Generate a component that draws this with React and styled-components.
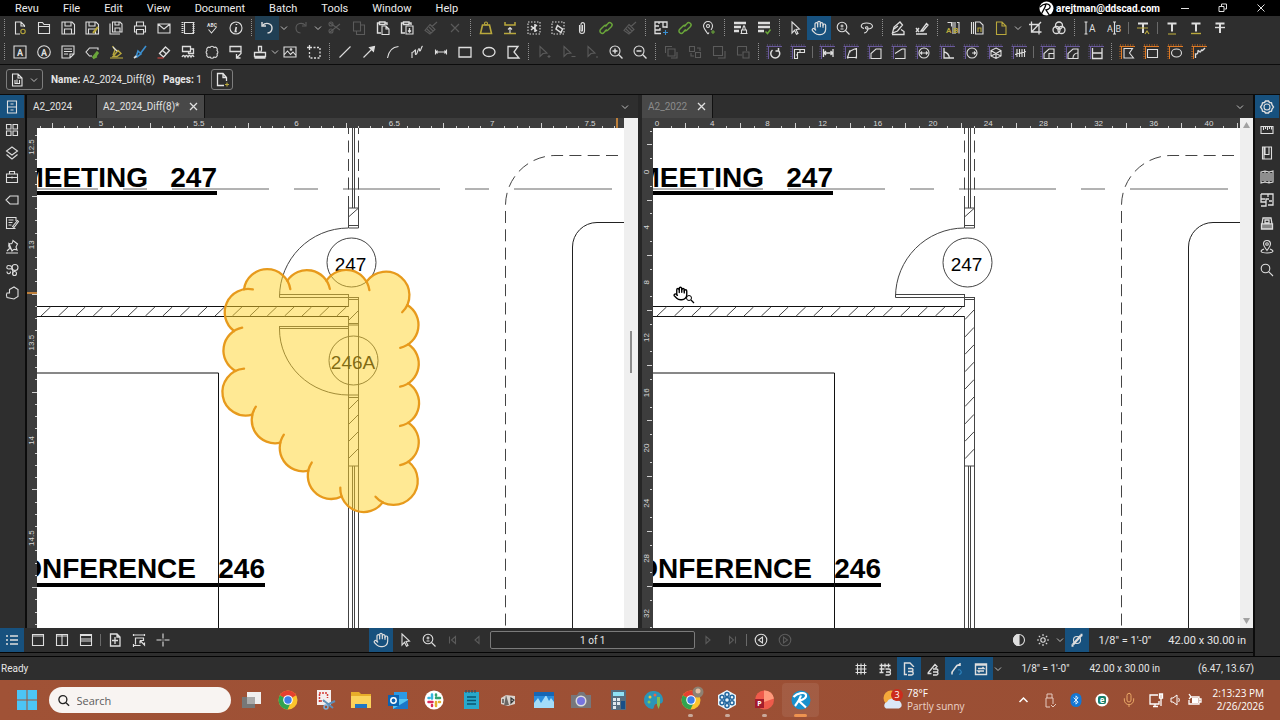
import React from 'react';
import styled, { createGlobalStyle, css } from 'styled-components';
import { Hand, Bluetooth, Mic } from 'lucide-react';

const GlobalStyle = createGlobalStyle`
  * { box-sizing: border-box; }
  body {
    margin: 0;
    background: #2e2e2e;
    color: #e6e6e6;
    font-family: Roboto, "Liberation Sans", sans-serif;
    font-size: 10px;
    overflow: hidden;
  }
  button {
    font: inherit;
    color: inherit;
    background: none;
    border: none;
    padding: 0;
  }
`;

/* ---------- icons ---------- */

const GREEN = '#6aa63a';
const YELLOW = '#b9a83c';
const BLUE = '#3b8fd0';
const PURPLE = '#6a5a9c';
const ORANGE = '#e07a24';

const Corner = ({ color = PURPLE }) => (
  <g stroke={color} strokeWidth="1" fill="none">
    <path d="M5 6.5H20M6.5 6V19" />
    <path d="M5 5H20M5 6V19" strokeDasharray="1 1.5" />
  </g>
);

const folded = 'M7.5 6H13l4 4v8.500H7.500zM13 6v4h4';
const floppy = 'M6 6h10l2.500 2.500V18H6zM9 6v4h6V6M8.500 18v-5h7v5';
const house = 'M8 18.500v-5L13 9h5v9.500z';

const icons = {
  newDoc: <><path d="M12 18H7.500V6H13l3.500 3.500V11M13 6v4h3.500" /><circle cx="15" cy="15.500" r="2.200" stroke={YELLOW} /></>,
  open: <path d="M6.500 17.500V6.500h4l1.500 2h5.500v9zM6.500 10.500h11" />,
  save: <path d={floppy} />,
  saveAs: <><path d={floppy} /><path d="M13 17l5-6" stroke={YELLOW} strokeWidth="2" /></>,
  saveAll: <path d="M8.500 6H16l2 2v8H8.500zM11 6v3h4V6M11 16v-4h5v4M6 7.500v10.500h10" />,
  print: <path d="M8.500 10V6h7v4M8.500 16H6.500v-6h11v6h-2M8.500 13.500h7V18h-7z" />,
  mail: <path d="M6 8h12v9H6zM6 8l6 5 6-5" />,
  binder: <><path d="M8.500 6.500h9v11h-9z" /><path d="M6.500 6v12M17.500 6v12" strokeWidth="2" strokeDasharray="1 1" /></>,
  spell: <><text x="12" y="10.500" fontSize="5" fontWeight="700" textAnchor="middle" fill="currentColor" stroke="none">ABC</text><path d="M8.500 13.500l3 3.500 5-6" /></>,
  info: <><circle cx="12" cy="12" r="6" /><path d="M12.300 11l-1 4.500h1.500M12.500 8v1" strokeWidth="1.600" /></>,
  undo: <><path d="M7.500 9.500c3-3.500 9.500-2.500 9.500 2.500 0 3-2 4.800-4.500 5" strokeWidth="1.400" /><path d="M7 6v4h4" strokeWidth="1.400" /></>,
  redo: <><path d="M16.500 9.500c-3-3.500-9.500-2.500-9.500 2.500 0 3 2 4.800 4.500 5" /><path d="M17 6v4h-4" /></>,
  cut: <><path d="M7 7l10 7M7 16l10-8" /><circle cx="8" cy="8" r="2" /><circle cx="8" cy="15" r="2" /></>,
  copy: <path d="M6.500 6h7v9h-7zM9.500 15v3.500h8V9h-4" />,
  paste: <><path d="M10 17H6.500V7h2M14 7h2v2M8.500 6h5.500v2.500H8.500z" strokeWidth="1.400" /><path d="M11 10h4l3 3v5.500h-7zM15 10v3h3" /></>,
  pasteIn: <><path d="M10 17H6.500V7h2M14 7h2v2M8.500 6h5.500v2.500H8.500z" strokeWidth="1.400" /><path d="M11 10h7v8h-7z" /><path d="M14.500 12v4M13 14.500l1.500 1.500 1.500-1.500" strokeWidth="1.400" /></>,
  brush: <path d="M18 6l-5 4.500M11 8.500l5 5-5 4.500-5-3.500zM8 13l4 4M10 11l4 4" />,
  cross: <path d="M8 8l8 8M16 8l-8 8" />,
  weight: <g stroke={YELLOW}><path d="M8.500 9h7l2 8.500h-11z" strokeWidth="1.600" /><circle cx="12" cy="7.500" r="1.500" /></g>,
  flatten: <><path d="M7 6v3h10V6M6 17.500h12" stroke={YELLOW} strokeWidth="1.500" /><path d="M12 17v-5M10 13.500l2-2 2 2" /></>,
  snipSel: <><path d="M6 6h12v12H6z" strokeDasharray="1.500 1.500" /><path d="M9 10l6 5M9 14l6-5M13 8v8" strokeWidth="1.600" /></>,
  eraseSel: <><path d="M6 6h12v12H6z" strokeDasharray="1.500 1.500" /><path d="M11.500 9.500l5 3.500-1.500 3.500-5-3.500z" strokeWidth="1.500" /></>,
  clip: <path d="M9.500 9v6a2.500 2.500 0 0 0 5 0V8a1.800 1.800 0 0 0-3.500 0v6.500a.8.800 0 0 0 1.500 0V9" />,
  link: <g stroke={GREEN} strokeWidth="1.400"><path d="M11 10.500l3-3a2.200 2.200 0 0 1 3.500 3l-3.500 3.500a2.200 2.200 0 0 1-3 0M13 13.500l-3 3a2.200 2.200 0 0 1-3.500-3L10 10a2.200 2.200 0 0 1 3 0" /></g>,
  planAdd: <><path d="M12 17.500H6V6h12v6M6 10h4M10 6v2M14 6v5h4M6 14h5v-2" strokeWidth="1.300" /><path d="M16.500 14v5M14 16.500h5" stroke={BLUE} /></>,
  pinAdd: <><path d="M11 18c-3-4-4.500-6-4.500-8a4.500 4.500 0 0 1 9 0c0 1.500-.5 2.500-1.500 4M11 18l1-1.500" /><circle cx="11" cy="10" r="1.500" /><path d="M16 14v4M14 16h4" stroke={GREEN} /></>,
  setA: <><path d="M6 7h12M6 11h7M6 15h5" strokeWidth="2.500" /><path d="M13.500 17.500V14h5v3.500M14.500 14l1-4h1l1 4M12.500 17.500h7" /></>,
  setB: <><path d="M6 7h12M6 11h12M6 15h6" strokeWidth="2.500" /><path d="M13.500 15.500l2 2 3-4" stroke={GREEN} strokeWidth="1.500" /></>,
  arrow: <path d="M9 6l7.500 7-3.500.5 2 4-1.500.8-2-4L9 17z" />,
  hand: <Hand x="4" y="4" size={16} strokeWidth={1.800} />,
  zoomPage: <><circle cx="11" cy="11" r="4.800" /><path d="M14.500 14.500l4 4M9.500 10h3M9.500 13h3M11 8.500v3" /></>,
  zoomIn: <><circle cx="11" cy="11" r="5" /><path d="M14.800 14.800l3.700 3.700M8.500 11h5M11 8.500v5" strokeWidth="1.400" /></>,
  zoomOut: <><circle cx="11" cy="11" r="5" /><path d="M14.800 14.800l3.700 3.700M8.500 11h5" strokeWidth="1.400" /></>,
  lasso: <path d="M9 12.500c-4-.5-4-5.500 2.500-5.500s8.500 5 2 6c-2 .5-4-1-2.500-2s3 1 1.500 3.500c-.8 1.500-2 2.500-3.500 2.500" />,
  sign: <path d="M6.500 17l1.500-6 6-5 2.500 3-5 6zM6 18.500h12v-3l-3-2M8 13l4-3" strokeWidth="1.300" />,
  initial: <path d="M6 12l3 4M9 12l-3 4M11 15l5.500-7.500 1.500 1.500-5 6zM6 18h11" strokeWidth="1.300" />,
  compareAB: <><path d="M6.500 6.500h4v4M14 6v12M16 6.500h2v11M12 6v12" /><text x="5" y="17" fontSize="8" fontWeight="700" fill={YELLOW} stroke="none">A B</text></>,
  stackDoc: <><path d="M6.500 18V6M8.500 18V6M10.500 6H15l3 3v9h-7.500z" /><path d="M13 16v-4h3v4" stroke={YELLOW} /></>,
  yellowDoc: <path d={folded} stroke={YELLOW} />,
  crop: <path d="M8.500 5.500V16h10M6 8.500h10v10M8.500 16L18 6" strokeWidth="1.300" />,
  overlay: <g strokeWidth="1.300"><circle cx="12" cy="9.500" r="3.500" /><circle cx="9.500" cy="14" r="3.500" /><circle cx="14.500" cy="14" r="3.500" /></g>,
  cursorA: <><path d="M6.500 6h3M6.500 18h3M8 6v12" /><text x="11" y="15.500" fontSize="10" fill="currentColor" stroke="none">A</text></>,
  cursorAB: <><path d="M11 6h3M11 18h3M12.500 6v12" /><text x="5" y="15.500" fontSize="9" fill="currentColor" stroke="none">A</text><text x="13.500" y="15.500" fontSize="9" fill="currentColor" stroke="none">B</text></>,
  textIns: <><path d="M7 7.500h10M12 7.500V17" strokeWidth="2" /><path d="M6 12h11M14 18l2-3 2 3" stroke={YELLOW} /></>,
  textHigh: <><path d="M7.500 7.500h9M12 7.500v8" strokeWidth="2" /><path d="M8 18h8" stroke={YELLOW} /></>,
  textUnder: <><path d="M7.500 7.500h9M12 7.500v8" strokeWidth="2" /><path d="M7 17.500h10" stroke={YELLOW} strokeWidth="1.400" /></>,
  textStrike: <><path d="M7.500 7.500h9M12 7.500V17" strokeWidth="2" /><path d="M7 11.500h10" strokeWidth="1.400" /></>,

  textBox: <><path d="M6 6h12v12H6z" /><text x="12" y="15.500" fontSize="9" fontWeight="700" textAnchor="middle" fill="currentColor" stroke="none">A</text></>,
  typewriter: <><circle cx="12" cy="12" r="6.300" /><text x="12" y="15.500" fontSize="9" fontWeight="700" textAnchor="middle" fill="currentColor" stroke="none">A</text></>,
  note: <path d="M6 6h12v8l-4 4H6zM8 9h8M8 11.500h8M8 14h4M14 18v-4h4" />,
  tagClip: <><path d="M12 16H9.500L6 12l3.500-4H18v2" /><path d="M13 17l4-5 1 1-3.500 5zM13 18.500l4-2" stroke={GREEN} strokeWidth="1.700" /></>,
  highlighter: <><path d="M9 16.500l5-6 3 3-4 3zM8.500 6l2.500 4-2 5" stroke={YELLOW} strokeWidth="1.400" /><path d="M6 18h13" stroke={YELLOW} /><path d="M9 7l4 4" /></>,
  pen: <><path d="M18 6l-6 8M10 11l3 3-4 3L8 17z" stroke={BLUE} strokeWidth="1.600" /><path d="M6 18l2.500-2" strokeWidth="1.700" /></>,
  eraser: <><path d="M13.500 7l4 3.500-6 6.500-4-3.500zM10.500 10.500l4 3.500" strokeWidth="1.300" /><path d="M5.500 18h6" stroke="#d8453f" /></>,
  cloudText: <path d="M6.500 6.500h8v5h-8zM14.500 9h3v4.500h-5v-2M6 17c1-2 2-2 3 0 1-2 2-2 3 0 1-2 2-2 3 0 1-2 2-2 3 0" strokeWidth="1.300" />,
  cloud: <path d="M10 7.500a2.200 2.200 0 0 1 4 0 2.200 2.200 0 0 1 3 3 2.200 2.200 0 0 1 0 3.500 2.200 2.200 0 0 1-3 3 2.200 2.200 0 0 1-4 0 2.200 2.200 0 0 1-3-3 2.200 2.200 0 0 1 0-3.500 2.200 2.200 0 0 1 3-3z" />,
  callout: <path d="M6 6.500h11v5H6zM17 9.500v4l-4.500 4.500M12.500 14v4h4" strokeWidth="1.300" />,
  stamp: <path d="M10.500 6.500h3v3.500l-1 2.500h5v4H6.500v-4h5l-1-2.500zM6.500 18h11" strokeWidth="1.300" />,
  image: <><path d="M6 7h12v10H6zM6 15l3.500-4 3 3.500 2.500-2.500 3 3.500" /><circle cx="13" cy="9.500" r=".8" /></>,
  snapshot: <><path d="M7.500 5v5M5 7.500h5" strokeWidth="1.300" /><path d="M11.500 7.500H18V18H7.500v-6.500" strokeDasharray="2 1.500" strokeWidth="1.300" /></>,
  line: <path d="M6.500 17.500l11-11" />,
  arrowLine: <><path d="M6.500 17.500l8-8" /><path d="M12.500 7.500l5-1-1 5z" fill="currentColor" /></>,
  arc: <path d="M6.500 18C7.500 12 11 7 17.500 6.500" />,
  polyline: <path d="M7 18v-5.500c2 0 3-3 3.500-2.500s-1 5 .5 4.500 2-6 3-6 0 3 1 2.500 1-3.500 2.500-5" />,
  dim: <path d="M6.500 9.500v5M17.500 9.500v5M6.500 12h11M8.500 10.500L7 12l1.500 1.500M15.500 10.500L17 12l-1.500 1.500" />,
  rect: <path d="M6 7.500h12v9.500H6z" strokeWidth="1.300" />,
  ellipse: <ellipse cx="12" cy="12" rx="6" ry="4.500" strokeWidth="1.300" />,
  polygon: <path d="M7 6.500h10l-4 5.500 5 6H7z" strokeWidth="1.300" />,
  selAdd: <><path d="M8 6.500l7 6.500-4 .5-3 3z" /><path d="M17 15v3M15.500 16.500h3" /></>,
  selSub: <><path d="M8 6.500l7 6.500-4 .5-3 3z" /><path d="M15.500 16.500h4" /></>,
  selAll: <><path d="M8 6.500l7 6.500-4 .5-3 3z" /><path d="M17 16v2" /></>,
  front: <path d="M9 9h7v7H9zM6.500 13V6.500H13M12 18h6v-6" />,
  backward: <path d="M6.500 6.500h5v5h-5zM12.500 12.500h5v5h-5zM14 8h3v3M8 13v3h3" />,
  forward: <path d="M6.500 6.500h9v9h-9zM11 18h7v-7" />,
  back: <path d="M12 12h6v6h-6zM6.500 6.500h9V11M6.500 6.500v8.500H11" />,

  mRotate: <><Corner /><path d="M10.500 10a4.500 4.500 0 1 0 5.500 0M16.500 8v3h-3" strokeWidth="1.500" /></>,
  mLevel: <><Corner /><path d="M8.500 9.500h10v3h-7v6h-3zM14 10v2M10 15h2" /></>,
  mLength: <><Corner /><path d="M8.500 9v8M18 9v8M9 13h9M11 11l-2 2 2 2M15.500 11l2 2-2 2" strokeWidth="1.300" /></>,
  mPoly: <><Corner /><path d="M8.500 17.500l2-6 5-2.500h2v8.500z" /><path d="M8 17.500h1.500M10 11.500h1.500M16.500 9h1.500M16.500 17.500h1.500" strokeWidth="2" /></>,
  mArea: <><Corner /><path d={house} /></>,
  mPerim: <><Corner /><path d="M8 13.500L15 9h3v9.500H8" /></>,
  mDiam: <><Corner /><circle cx="13" cy="13" r="5" /><path d="M9 13h8M11 11.500L9.500 13l1.500 1.500M15 11.500l1.500 1.500-1.500 1.500" /></>,
  mAngle: <><Corner /><path d="M9 8v10h10M9 12c3 .5 5 3 5.500 6" strokeWidth="1.300" /></>,
  mRadius: <><Corner /><circle cx="13" cy="13" r="5" /><path d="M13 13h4M15 11.500l1.500 1.500-1.500 1.500" /></>,
  mVolume: <><Corner /><path d="M13 8l5 2.500v5.500l-5 2.500-5-2.500v-5.500zM8 10.500l5 3 5-3M13 13.500V18M8 16l5-2.500 5 2.500" /></>,
  mCount: <><Corner /><path d="M10 9v8M12.500 9v8M15 9v8M17.500 9v8M8 14.500l11-3" /></>,
  mCutArea: <><Corner /><path d={house} /><path d="M13 18v-4.500h5" /></>,
  mCutPoly: <><Corner /><path d={house} /><path d="M13 18c0-3 2-5 5-5" /></>,
  mSlope: <><Corner /><path d="M8.500 8v10.500H18V8M8.500 13H18" strokeWidth="1.300" /></>,
  oPoly: <><Corner color={ORANGE} /><path d="M9 8.500h8.500l-3 4.500 4 5H9z" /></>,
  oRect: <><Corner color={ORANGE} /><path d="M8.500 9.500h10v8h-10z" /></>,
  oEllipse: <><Corner color={ORANGE} /><ellipse cx="13.500" cy="13" rx="5" ry="4" /></>,
  oFree: <><Corner color={ORANGE} /><path d="M8.500 18v-4c2 .5 2.500-1 2.500-3s2 3 3 0 1 1 2-1l2-2" strokeWidth="1.300" /></>,

  fileAccess: <path d="M7.500 6h9v12h-9zM7.500 12h9M10.500 9h3M10.500 15h3" />,
  thumbs: <path d="M6.500 6.500h4.500v4.500H6.500zM13 6.500h4.500v4.500H13zM6.500 13h4.500v4.500H6.500zM13 13h4.500v4.500H13z" />,
  layers: <path d="M12 6l5.500 4-5.500 4-5.500-4zM6.500 13.500l5.500 4.500 5.500-4.500" />,
  toolbox: <path d="M6.500 9h11v8.500h-11zM9.500 9V6.500h5V9M6.500 12.500h11M12 11.500v2" />,
  tag: <path d="M10 8h8v8h-8l-4-4z" />,
  sheetPen: <path d="M16 10V6.500H6.500v11h9M8.500 9h5M8.500 11.500h4M8.500 14h3M12.500 15.500l5-6 1 1-4.500 6z" />,
  pushpin: <path d="M6 18h12M7 16l3-3M9 8.500c3 1 3.500-.5 4-3l4.500 3.500-1.500 3 1 3c-2-1-4-.500-5 1zM9 8.500c-.5 2 0 5 3 6.500" />,
  binocs: <><circle cx="15" cy="9.500" r="3" /><circle cx="14.500" cy="15.500" r="2" /><path d="M12.500 11.500c-1-4-2-4-4-4S6 11 8.500 11s3-1 4 1 0 4 .500 4M7 13.500c0 3 3.500 3 3.500 0" /></>,
  glove: <path d="M9.500 8.500L14 6l4 2.500v7L14 18l-7-1.500c-1-2-1-3 0-4.500h2.500zM9.500 8.500V12" />,
  gear: <><circle cx="12" cy="12" r="3" /><path d="M10.500 6h3l1 1.500 2 .3.500 2L18.500 12 17 14.200l-.5 2-2 .3-1 1.500h-3l-1-1.500-2-.3-.5-2L5.500 12 7 9.800l.5-2 2-.3z" strokeWidth="1.400" /></>,
  ruler: <path d="M6 8.500h12v7H6zM8.500 8.500v3.500M10.500 8.500v2.500M12.500 8.500v3.500M14.500 8.500v2.500M16.500 8.500v3" />,
  bookmark: <path d="M7.500 6h9v12h-9zM10 6v7.500h4V6M9 6v12" />,
  map: <path d="M6 7l4-1 4 1 4-1v11l-4 1-4-1-4 1zM10 6v11M14 7v11M8 8v8M12 8v8M16 8v8" />,
  plan: <path d="M6 6h12v11h-5M6 6v8h5v4H6M6 11h4M13 6v3M11 14v-3h3M17 13h-3" strokeWidth="1.300" />,
  studio: <><path d="M8 7h8l1 6H7zM6.500 13h11v5h-11zM10 9h4v3h-4z" strokeWidth="1.300" /><path d="M6.500 16h11" strokeWidth="4" opacity=".5" /></>,
  geoPin: <><path d="M12 15.500c-2.500-3.500-3.500-4.500-3.500-6.500a3.500 3.500 0 0 1 7 0c0 2-1 3-3.500 6.500zM9 14c-5 2-3 4 3 4s8-2 3-4" /><circle cx="12" cy="9" r="1.300" /></>,
  search: <><circle cx="10.500" cy="10.500" r="4.300" /><path d="M13.800 13.800l4.200 4.200" /></>,
  list: <path d="M6 8h2M6 12h2M6 16h2M10 8h8M10 12h8M10 16h8" strokeWidth="1.600" />,
  viewOne: <path d="M6.500 6.500h11v11h-11zM6.500 8h11" />,
  viewCols: <path d="M6.500 6.500h11v11h-11zM12 6.500v11M6.500 8h11" />,
  viewRows: <path d="M6.500 6.500h11v11h-11zM6.500 11h11M6.500 13h11M6.500 7.500h11" />,
  fitPage: <path d="M7.500 6H14l3 3v9H7.500zM12 9v7M9 12.500h6M14 6v3h3" strokeWidth="1.300" />,
  fitWidth: <path d="M6.500 6v2M6.500 7h11M17.500 6v2M8.500 16.500v-6.500h8v3M6.500 17.500h7M6.500 16v3M13 12.500v3M13 12.500h3M13 12.500l4.500 4.500v-2.500" strokeWidth="1.200" />,
  crosshair: <path d="M12 5.500v5M12 13.500v5M5.500 12h5M13.500 12h5M11.500 12h1" />,
  first: <path d="M8.500 8.500v7M14.500 8.500v7l-4-3.500z" />,
  prev: <path d="M14 8.500v7L10 12z" />,
  next: <path d="M10 8.500v7l4-3.500z" />,
  last: <path d="M9.500 8.500v7l4-3.500zM15.500 8.500v7" />,
  viewPrev: <><circle cx="12" cy="12" r="5.800" /><path d="M13.500 9v6L9.500 12z" /></>,
  viewNext: <><circle cx="12" cy="12" r="5.800" /><path d="M10.500 9v6l4-3z" /></>,
  contrast: <><circle cx="12" cy="12" r="5.500" /><path d="M12 6.500a5.500 5.500 0 0 0 0 11z" fill="currentColor" /></>,
  sun: <><circle cx="12" cy="12" r="2.200" /><path d="M12 6v2M12 16v2M6 12h2M16 12h2M7.800 7.800l1.400 1.400M14.800 14.800l1.400 1.400M7.800 16.200l1.400-1.400M14.800 9.200l1.400-1.400" /></>,
  lineWeight: <><path d="M8 16.500l8-9" strokeWidth="2.500" /><circle cx="12" cy="12" r="3.500" /><path d="M6.500 17.500h2M15.500 7h2" strokeWidth="2.500" /></>,
  grid: <path d="M8.500 6.500v11M12 6.500v11M15.500 6.500v11M6.500 8.500h11M6.500 12h11M6.500 15.500h11" />,
  gridSnap: <path d="M8.500 6.500v9M12 6.500v4M15.500 6.500v4M6.500 8.500h11M6.500 12h5M6.500 15.500h4M12.500 12h3.500a1.500 1.500 0 0 1 0 3h-3M16 15a1.500 1.500 0 0 1 0 3h-3.500" strokeWidth="1.300" />,
  docSnap: <path d="M10 17.500H7.500V6H13l3.500 3.500V10M11 11.500h3.500a1.500 1.500 0 0 1 0 3H11M14.500 14.500a1.500 1.500 0 0 1 0 3.500H11" strokeWidth="1.400" />,
  markSnap: <path d="M7 16l7-8.500 2 2-1.500 1.500M6.500 16.500h4M12 12h3.500a1.500 1.500 0 0 1 0 3H12M15.500 15a1.500 1.500 0 0 1 0 3H12" strokeWidth="1.300" />,
  reuse: <><path d="M7 16.500c0-3 3-5 5-8l3-1M7 14.500v3M15 6v3" strokeWidth="1.500" /><path d="M13 13c3-1 5 3 1 4.500" stroke="#2c82bd" /></>,
  sync: <path d="M6.500 7h11v10.500h-11zM6.500 8h11M9 11.500h6l-1.500-1.500M15 14H9l1.500 1.500" strokeWidth="1.400" />,
  pageSet: <path d="M7.500 6H13l4 4v8H7.500zM13 6v4h4M10 12v3.500h4.500V12M12 11.500v4" />,
  pageNew: <><path d="M14 17.500H7.500V5.500H13l3.500 4V13M13 5.500v4h3.500" strokeWidth="1.300" /><path d="M17 14.500v4M15 16.500h4" stroke={YELLOW} /></>,
};

const GlyphSvg = styled.svg`
  display: block;
  width: 24px;
  height: 24px;
  flex: none;
  fill: none;
  stroke: currentColor;
  stroke-width: 1.1;
`;

const Glyph = ({ name }) => (
  <GlyphSvg viewBox="0 0 24 24" aria-hidden="true">{icons[name]}</GlyphSvg>
);

const IconButton = styled.button`
  display: flex;
  flex: none;
  align-items: center;
  justify-content: center;
  width: 24px;
  height: ${({ $short }) => ($short ? '23px' : '24px')};
  color: ${({ disabled }) => (disabled ? '#5b5b5b' : '#dedede')};
  background: ${({ $on, $soft }) => ($on ? '#17517e' : $soft ? '#203f54' : 'transparent')};
`;

const ChevronButton = styled.button`
  display: flex;
  flex: none;
  align-items: center;
  justify-content: center;
  width: ${({ $tight }) => ($tight ? '6px' : '10px')};
  height: 24px;
`;

const Chevron = ({ tight, label = 'More' }) => (
  <ChevronButton $tight={tight} aria-label={label}>
    <svg width="8" height="6" viewBox="0 0 8 6" fill="none" stroke="#bdbdbd" overflow="visible">
      <path d="M1 1.500l3 3 3-3" />
    </svg>
  </ChevronButton>
);

const Grip = styled.span`
  flex: none;
  width: 1px;
  height: 18px;
  margin: 0 3px;
  background: repeating-linear-gradient(#8f8f8f 0 1px, transparent 1px 2px);
`;

const Divider = styled.span`
  flex: none;
  width: 1px;
  height: 12px;
  margin: 0 2px;
  background: #6a6a6a;
`;

/* ---------- title and tool bars ---------- */

const Page = styled.div`
  display: flex;
  flex-direction: column;
  height: 100vh;
`;

const MenuBar = styled.nav`
  display: flex;
  align-items: center;
  height: 16px;
  padding: 0 14px 0 15px;
  background: #000;
  color: #ececec;
  font-size: 11px;
`;

const MenuList = styled.div`
  display: flex;
  gap: 24px;
`;

const Account = styled.div`
  display: flex;
  align-items: center;
  gap: 2px;
  margin-left: auto;
  margin-right: 20px;
  font-size: 10px;
  font-weight: 700;
  color: #fff;
`;

const WindowButtons = styled.div`
  display: flex;
  gap: 28px;

  svg { display: block; fill: none; stroke: #e0e0e0; }
`;

const Toolbars = styled.div`
  border-bottom: 1px solid #0c0c0c;
`;

const ToolRow = styled.div`
  display: flex;
  align-items: center;
  height: 24px;
  padding-left: 1px;
`;

const PropertyBar = styled.div`
  display: flex;
  align-items: center;
  height: 30px;
  padding: 0 6px;
  border-bottom: 1px solid #0c0c0c;
`;

const PropertyText = styled.span`
  margin-left: 8px;
`;

const Outlined = styled.button`
  display: flex;
  align-items: center;
  justify-content: center;
  width: ${({ $wide }) => ($wide ? '37px' : '22px')};
  height: 21px;
  padding-right: ${({ $wide }) => ($wide ? '5px' : '0')};
  margin-left: ${({ $wide }) => ($wide ? '0' : '9px')};
  border: 1px solid #7d7d7d;
  border-radius: 3px;
  overflow: hidden;
`;

/* ---------- workspace ---------- */

const Workspace = styled.div`
  display: flex;
  flex: 1;
  min-height: 0;
`;

const Center = styled.div`
  display: flex;
  flex-direction: column;
  flex: 1;
  min-width: 0;
  margin-bottom: 3px;
  border-bottom: 1px solid #050505;
`;

const Row = styled.div`
  display: flex;
  flex: 1;
  min-height: 0;
`;

const Rail = styled.aside`
  display: flex;
  flex-direction: column;
  flex: none;
  width: 27px;
  ${({ $side }) => ($side === 'left'
    ? css`border-right: 2px solid #0c0c0c;`
    : css`border-left: 2px solid #0c0c0c;`)}

  button:nth-of-type(3n) { margin-bottom: 1px; }
`;

const Pane = styled.section`
  display: flex;
  flex-direction: column;
  flex: 1;
  min-width: 0;
`;

const Splitter = styled.div`
  flex: none;
  width: 4px;
  background: #262626;
`;

const TabBar = styled.div`
  display: flex;
  align-items: center;
  height: 23px;
  padding-right: 8px;

  > :last-child { margin-left: auto; }
`;

const Tab = styled.div`
  display: flex;
  align-items: center;
  gap: 10px;
  height: 23px;
  padding: 0 6px;
  border-right: 1px solid #111;
  min-width: 70px;
  color: ${({ $dim }) => ($dim ? '#8b8b8b' : '#e2e2e2')};
  background: ${({ $active }) => ($active ? '#484848' : 'transparent')};

  svg { display: block; stroke: #e0e0e0; stroke-width: 1.3; }
`;

const Sheet = styled.div`
  display: grid;
  flex: 1;
  min-height: 0;
  grid-template-columns: ${({ $edge }) => $edge}px 1fr ${({ $bar }) => $bar}px;
  grid-template-rows: 10px 1fr;
  background: #3d3d3d;
`;

const RulerSvg = styled.svg`
  display: block;
  width: 100%;
  height: 100%;
  overflow: hidden;
  stroke: #d0d0d0;
  fill: #d8d8d8;

  text {
    font-family: "Liberation Sans", sans-serif;
    font-size: 8px;
    stroke: none;
    text-anchor: middle;
  }
`;

const Canvas = styled.div`
  background: #fff;
  overflow: hidden;
  min-height: 0;

  > svg { display: block; width: 100%; height: 100%; }
`;

const Scroll = styled.div`
  display: flex;
  flex-direction: column;
  align-items: center;
  justify-content: ${({ $thumb }) => ($thumb ? 'center' : 'space-between')};
  grid-column: 3;
  grid-row: 1 / 3;
  padding: ${({ $thumb }) => ($thumb ? '0 0 42px' : '4px 0')};
  background: #efefef;

  svg { fill: #a2a2a2; }
`;

const Thumb = styled.span`
  width: 2px;
  height: 42px;
  background: #8a8a8a;
`;

const NavBar = styled.div`
  display: flex;
  align-items: center;
  height: 24px;
`;

const Group = styled.div`
  display: flex;
  align-items: center;
`;

const ViewTools = styled(Group)`
  margin-left: 2px;
`;

const NavCenter = styled(Group)`
  margin: 0 auto;
`;

const NavEnd = styled(Group)`
  padding: 0 7px 0 15px;
`;

const PageInput = styled.input`
  width: 205px;
  height: 18px;
  margin: 0 1px;
  border: 1px solid #7a7a7a;
  border-radius: 2px;
  background: #262626;
  color: #e6e6e6;
  font: inherit;
  text-align: center;
`;

const Measure = styled.span`
  margin-left: ${({ $gap }) => $gap}px;
  white-space: nowrap;
  font-size: ${({ $small }) => ($small ? '10px' : '11px')};
`;

const StatusBar = styled.footer`
  display: flex;
  align-items: center;
  justify-content: space-between;
  height: 24px;
  padding: 0 26px 0 1px;
  border-top: 1px solid #050505;
  background: #2e2e2e;
`;

/* ---------- taskbar ---------- */

const TaskBar = styled.footer`
  display: flex;
  align-items: center;
  height: 40px;
  padding: 0 16px 0 17px;
  background: linear-gradient(90deg, #a05236, #994e34);
  color: #fff;
  font-family: "Open Sans", "Noto Sans", sans-serif;
`;

const SearchBox = styled.label`
  display: flex;
  align-items: center;
  gap: 7px;
  width: 182px;
  height: 26px;
  margin: 0 2px 0 12px;
  padding: 0 9px;
  border-radius: 13px;
  background: #f8f4f2;

  input {
    width: 100%;
    padding: 0;
    border: none;
    background: none;
    font: 11px "Open Sans", sans-serif;
    outline: none;
  }
  input::placeholder { color: #5c5c5c; opacity: 1; }
`;

const Apps = styled.div`
  display: flex;
  flex: 0 1 586px;
`;

const AppButton = styled.button`
  display: flex;
  flex: 1;
  flex-direction: column;
  align-items: center;
  justify-content: center;
  height: 34px;
  border-radius: 4px;
  position: relative;
  background: ${({ $state }) => ($state === 'active' ? 'rgba(255, 255, 255, 0.08)' : 'transparent')};

  &::after {
    content: '';
    position: absolute;
    bottom: 0;
    height: 3px;
    border-radius: 2px;
    width: ${({ $state }) => ($state === 'active' ? '13px' : $state ? '5px' : '0')};
    background: ${({ $state }) => ($state === 'active' ? '#ee9350' : '#c9a99b')};
  }
`;

const Weather = styled.div`
  display: flex;
  align-items: center;
  gap: 3px;
  margin-left: auto;
  margin-right: 51px;
  font-size: 10px;
  line-height: 13px;

  span { color: #ecd3c9; }
`;

const Tray = styled.div`
  display: flex;
  align-items: center;
  gap: ${({ $close }) => ($close ? '7px' : '11px')};
  margin-right: ${({ $close }) => ($close ? '0' : '11px')};

  > svg { display: block; fill: none; stroke: #fff; overflow: visible; }
`;

const Clock = styled.time`
  font-size: 10px;
  line-height: 13px;
  text-align: right;
`;

/* ---------- data ---------- */

const menus = ['Revu', 'File', 'Edit', 'View', 'Document', 'Batch', 'Tools', 'Window', 'Help'];

// '|' grip, '/' divider, 'v' chevron ('w' tight), trailing - disabled, * pressed, ~ soft highlight
const rowOne = '| newDoc open save saveAs saveAll print mail binder spell info | undo~ v redo- v cut- copy- paste pasteIn brush- cross- | weight flatten snipSel eraseSel clip link brush- | planAdd link pinAdd | setA setB | arrow hand* zoomPage lasso | sign initial | compareAB stackDoc yellowDoc v crop overlay | cursorA cursorAB / textIns / textHigh textUnder textStrike';
const rowTwo = '| textBox typewriter note tagClip highlighter pen eraser cloudText cloud callout stamp w image snapshot | line arrowLine arc polyline dim rect ellipse polygon | selAdd- selSub- selAll- zoomIn zoomOut | front- backward- forward- back- | mRotate mLevel / mLength mPoly mArea mPerim mDiam mAngle mRadius mVolume mCount / mCutArea mCutPoly mSlope | oPoly oRect oEllipse oFree';
const leftRail = 'fileAccess* thumbs layers toolbox tag sheetPen pushpin binocs glove';
const rightRail = 'gear* ruler bookmark map plan studio geoPin search';

const Tools = ({ items, short }) => items.split(' ').map((item, i) => {
  if (item === '|') return <Grip key={i} />;
  if (item === '/') return <Divider key={i} />;
  if (item === 'v' || item === 'w') return <Chevron key={i} tight={item === 'w'} />;
  const name = item.replace(/[-*~]$/, '');
  return (
    <IconButton
      key={i}
      aria-label={name}
      disabled={item.endsWith('-')}
      $on={item.endsWith('*')}
      $soft={item.endsWith('~')}
      $short={short}
    >
      <Glyph name={name} />
    </IconButton>
  );
});

const CloseX = () => (
  <svg width="9" height="9" viewBox="0 0 9 9"><path d="M1 1l7 7M8 1l-7 7" /></svg>
);

const Ruler = ({ vertical, origin, step, labels, ticks, mark }) => {
  const all = [];
  for (let i = -ticks; i < (labels.length + 1) * ticks; i += 1) {
    const at = Math.round(origin + (i * step) / ticks) + 0.5;
    const phase = ((i % ticks) + ticks) % ticks;
    if (phase !== 0) all.push({ at, len: phase * 2 === ticks ? 5 : 2 });
  }
  return (
    <RulerSvg>
      {all.map(({ at, len }) => (vertical
        ? <path key={at} d={`M${10 - len} ${at}H10`} />
        : <path key={at} d={`M${at} ${10 - len}V10`} />))}
      {labels.map((label, i) => {
        const at = origin + i * step;
        return vertical
          ? <text key={label} transform={`translate(7 ${at}) rotate(-90)`}>{label}</text>
          : <text key={label} x={at} y="8">{label}</text>;
      })}
      {mark && <path stroke="#e8963a" strokeWidth="1.500" d={vertical ? `M0 ${mark}H10` : `M${mark} 0V10`} />}
    </RulerSvg>
  );
};

/* ---------- floor plan ---------- */

const PlanText = styled.text`
  font-family: "Liberation Sans Narrow", "Liberation Sans", sans-serif;
  font-size: ${({ $title }) => ($title ? '28px' : '19px')};
  font-weight: ${({ $title }) => ($title ? 700 : 400)};
  fill: #000;
  stroke: none;
`;

const hatch = (from, to, step) => {
  const out = [];
  for (let v = from; v < to; v += step) out.push(v);
  return out;
};

const wallHatch = hatch(41, 346, 17.4);

// outline of the revision cloud, clockwise
const cusps = [
  [244, 289.300], [287.300, 280.700], [326.500, 280.700], [366.500, 281.700], [407.300, 305],
  [408.300, 344.300], [408.300, 383.300], [408.300, 422.700], [408.300, 461.700], [382.700, 502.300],
  [341.700, 496.500], [308.300, 470.700], [280.300, 442.700], [252.300, 414.700], [235.500, 371], [234, 331],
];

const cloudArcs = cusps.map(([x0, y0], i) => {
  const [x1, y1] = cusps[(i + 1) % cusps.length];
  const dx = x1 - x0;
  const dy = y1 - y0;
  const chord = Math.hypot(dx, dy);
  const r = Math.max(23.4, chord / 2 + 0.1);
  const h = Math.sqrt(r * r - (chord * chord) / 4);
  const cx = (x0 + x1) / 2 - (dy / chord) * h;
  const cy = (y0 + y1) / 2 + (dx / chord) * h;
  const sweep = 2 * Math.asin(chord / (2 * r)) + 0.38;
  const end = Math.atan2(y1 - cy, x1 - cx) + 0.38;
  return {
    x0, y0, x1, y1, r, large: sweep > Math.PI ? 1 : 0, tx: cx + r * Math.cos(end), ty: cy + r * Math.sin(end),
  };
});

const cloudFill = `M${cusps[0]}${cloudArcs.map((a) => `A${a.r} ${a.r} 0 0 1 ${a.x1} ${a.y1}`).join('')}Z`;

const RevisionCloud = () => (
  <g strokeLinecap="round" strokeLinejoin="round">
    <path d={cloudFill} fill="#ffd42a" fillOpacity="0.5" stroke="none" />
    {cloudArcs.map((a, i) => (
      <path
        key={i}
        d={`M${a.x0} ${a.y0}A${a.r} ${a.r} 0 ${a.large} 1 ${a.tx} ${a.ty}`}
        stroke="#e79a1c"
        strokeWidth="2.300"
      />
    ))}
  </g>
);

const FloorPlan = ({ revised }) => (
  <svg role="img" aria-label="Floor plan">
    <g transform="translate(-37 -128)" fill="none" stroke="#444" strokeWidth="1">
      <path d="M37 189H98M123 189H147M172 189H269M294 189H318M343 189H440M465 189H489M514 189H612" stroke="#666" />
      <PlanText $title x="148" y="187" textAnchor="end">MEETING</PlanText>
      <PlanText $title x="217" y="187" textAnchor="end">247</PlanText>
      <path d="M37 193H217M37 585H265" stroke="#000" strokeWidth="4" />
      <PlanText $title x="196" y="578" textAnchor="end">CONFERENCE</PlanText>
      <PlanText $title x="265" y="578" textAnchor="end">246</PlanText>
      <path d="M37 373H218.500V628" stroke="#111" />

      <path d="M348.500 122V208M358.500 122V208" strokeDasharray="12 6.500" />
      <path d="M352.500 128V208M354.500 128V208" />
      <path d="M348.500 208H358.500V228H348.500zM348.500 225.500H358.500M348.500 217L358 208.500" />
      <path d="M348 228A69 69 0 0 0 279.500 297" />
      <path d="M279.500 294.500H348.500V297.500H279.500z" />
      <circle cx="351.500" cy="262.500" r="24.500" />
      <PlanText x="350.500" y="271" textAnchor="middle">247</PlanText>

      <path d="M37 306.500H348.500M37 316.500H348.500" stroke="#111" />
      {wallHatch.map((x) => <path key={x} d={`M${x} 316L${x + 9.500} 307`} />)}
      <path d="M348.500 294V307M348.500 316V628M358.500 297V628M348.500 297.500H358.500M348.500 299.500H358.500" />
      <path d="M348.500 466H358.500M352.500 466V628M354.500 466V628" />
      {revised ? (
        <>
          <path d="M348.500 323.500H358.500M348.500 325H358.500M279.500 326.500H348.500M279.500 328.500H348.500M279.500 326V329A69 66 0 0 0 348.500 395M348.500 395H358.500M348.500 397.500H358.500" />
          <path d="M349 320L358 311M349 409L358 400M349 424L358 415M349 441L358 432M349 458L358 449" />
          <circle cx="353.500" cy="360.500" r="24.500" />
          <PlanText x="353" y="369" textAnchor="middle">246A</PlanText>
        </>
      ) : (
        hatch(310, 460, 17.4).map((y) => <path key={y} d={`M349 ${y + 9.500}L358 ${y}`} />)
      )}

      <path d="M618 155.500H555A50 50 0 0 0 505.500 206V628" strokeDasharray="12 6.300" />
      <path d="M640 222.500H597A24.500 24.500 0 0 0 572.500 247V628" stroke="#222" />
      {revised ? <RevisionCloud /> : (
        <g stroke="#000">
          <Hand x="57" y="286" size={15} strokeWidth={2.200} color="#000" />
          <circle cx="73" cy="298" r="2.500" />
          <path d="M75 300l3 3" strokeWidth="1.300" />
        </g>
      )}
    </g>
  </svg>
);

/* ---------- taskbar pictures ---------- */

const chrome = (
  <>
    <circle cx="10" cy="10" r="9.500" fill="#fbc52d" />
    <path d="M10 10L1.800 5.200A9.500 9.500 0 0 1 18.200 5.200z" fill="#e5402f" />
    <path d="M10 10L1.800 5.200A9.500 9.500 0 0 0 9.500 19.500L13 12z" fill="#31a350" />
    <circle cx="10" cy="10" r="4.800" fill="#fff" />
    <circle cx="10" cy="10" r="3.700" fill="#3f7fe8" />
  </>
);

const apps = [
  ['Task view', <><path d="M6 2h14v12H6z" fill="#efefef" /><path d="M1 7h13v11H1z" fill="#777" /><path d="M6 7h8v7H6z" fill="#aaa" /></>],
  ['Chrome', chrome],
  ['Snipping Tool', <><path d="M2 0h14v15H2z" fill="#f4eeee" /><path d="M4 3h9M4.500 4v8M12.500 4v4M5 11h4" stroke="#d33b35" strokeWidth="1.500" strokeDasharray="2 1" /><path d="M8 10l10 8M20 11l-8 4" stroke="#5f8fb8" strokeWidth="2" /><circle cx="11" cy="17" r="2" fill="none" stroke="#7badd8" strokeWidth="1.500" /></>],
  ['File Explorer', <><path d="M0 2h8l2 2h10v14H0z" fill="#e8ad2a" /><path d="M0 6h20v12H0z" fill="#fbd35c" /><path d="M4 18v-4h12v4z" fill="#2177c4" /></>],
  ['Outlook', <><path d="M6 2h13v10H6z" fill="#2c9ae6" /><path d="M5 9h15v10H5z" fill="#54c4f2" /><path d="M5 19l15-9v9z" fill="#1b77c8" /><path d="M0 5h11v11H0z" fill="#0d62b0" /><circle cx="5.500" cy="10.500" r="2.700" fill="none" stroke="#fff" strokeWidth="1.500" /></>],
  ['Slack', <><circle cx="10" cy="10" r="9.500" fill="#fff" /><g strokeWidth="2.500" strokeLinecap="round" fill="none"><path d="M8 4.500v4M4.500 8h1" stroke="#35b6df" /><path d="M12 8h4M12 4.500v1" stroke="#32a36f" /><path d="M12 12v4M15 12h1" stroke="#e6b02e" /><path d="M4.500 12h4M8 15v1" stroke="#dc2c5b" /></g></>],
  ['Notepad', <><path d="M3 2h15v17H3z" fill="#28a9cc" /><path d="M5 0v3M8 0v3M11 0v3M14 0v3" stroke="#174e6b" /><path d="M6 7h9M6 10.500h9M6 14h9" stroke="#08546f" strokeWidth="1.500" /></>],
  ['Converter', <><path d="M3 8l5-3 9 1v8l-7 2-7-2z" fill="#d9d2cc" /><path d="M8 5l3 10-5 .5z" fill="#6a6663" /><path d="M5 9v4M13 8l3 2-3 3z" stroke="#333" strokeWidth="1.200" fill="none" /></>],
  ['Monitor', <><path d="M0 2h20v16H0z" fill="#2a8ddd" /><path d="M0 13l4-5 3 5 5-8 3 6 2-3 3 4v6H0z" fill="#a3dcf9" /><path d="M0 2h20v4H0z" fill="#1666b4" /></>],
  ['Camera', <><path d="M0 5h6l2-3h5l2 3h5v13H0z" fill="#77777c" /><circle cx="10" cy="11" r="5.500" fill="#ddd" /><circle cx="10" cy="11" r="4" fill="#7774e0" /></>],
  ['Calculator', <><path d="M3 0h15v20H3z" fill="#566d80" /><path d="M5 2h11v4H5z" fill="#8fe1f6" /><path d="M5 8h3v3H5zM9 8h3v3H9zM5 12h3v3H5zM9 12h3v3H9zM5 16h3v3H5z" fill="#dfe7ed" /><path d="M13 11h4v8h-4z" fill="#174e87" /></>],
  ['Paint', <><path d="M10 1a9 9 0 0 0-2 18c3 0 1-4 4-5s7 1 7-4-4-9-9-9z" fill="#2b95b8" /><circle cx="6" cy="7" r="1.500" fill="#e8c43d" /><circle cx="11" cy="5" r="1.500" fill="#e8654a" /><circle cx="5" cy="12" r="1.500" fill="#84c557" /><path d="M13 7h3v8l-1.500 4-1.500-4z" fill="#7fbd55" /></>],
  ['Chrome profile', <>{chrome}<circle cx="17" cy="2" r="5.500" fill="#8d8173" /><circle cx="17" cy="1" r="2.500" fill="#e0bda3" /></>, 'open'],
  ['GoTo', <><path d="M10 0l9 5v10l-9 5-9-5V5z" fill="#eaf5fc" /><g fill="none" stroke="#23679f" strokeWidth="1.500"><circle cx="10" cy="10" r="2.500" /><circle cx="10" cy="4.500" r="2" /><circle cx="10" cy="15.500" r="2" /><circle cx="5" cy="7.300" r="2" /><circle cx="15" cy="7.300" r="2" /><circle cx="5" cy="12.700" r="2" /><circle cx="15" cy="12.700" r="2" /></g></>, 'open'],
  ['PowerPoint', <><circle cx="10.500" cy="10" r="9.500" fill="#ef5b4b" /><path d="M10 .5a9.500 9.500 0 0 1 10 8L10 12z" fill="#ff9a7c" /><path d="M1 9h9v9H1z" fill="#a41c2c" /><text x="5.500" y="16" fontSize="7" fontWeight="700" textAnchor="middle" fill="#fff">P</text></>, 'open'],
  ['Revu', <><circle cx="10" cy="10" r="9.500" fill="#1791cd" /><path d="M2.500 7C6 3 14 1.500 15 5s-7 6-7 6l7 6.500M10 5.500C8.500 10 6.500 13 4 16" fill="none" stroke="#fff" strokeWidth="2.200" /></>, 'active'],
];

const App = () => (
  <>
    <GlobalStyle />
    <Page>
      <MenuBar>
        <MenuList>
          {menus.map((item) => <button key={item}>{item}</button>)}
        </MenuList>
        <Account>
          <svg width="15" height="15" viewBox="0 0 15 15">
            <circle cx="7.500" cy="7.500" r="7" fill="#fff" />
            <path d="M1 6c4-4 9-4 10-1s-4 4-4 4l4 6M7 3C6 8 4 9 2.500 13" fill="none" stroke="#000" strokeWidth="1.300" />
          </svg>
          arejtman@ddscad.com
        </Account>
        <WindowButtons>
          <button aria-label="Minimize"><svg width="10" height="10"><path d="M1 5.500h8" /></svg></button>
          <button aria-label="Restore"><svg width="10" height="10"><path d="M1 3.500h5v5h-5zM3.500 3v-2h5v5h-2" /></svg></button>
          <button aria-label="Close"><svg width="10" height="10"><path d="M1.500 1.500l7 7M8.500 1.500l-7 7" /></svg></button>
        </WindowButtons>
      </MenuBar>

      <Toolbars>
        <ToolRow><Tools items={rowOne} /></ToolRow>
        <ToolRow><Tools items={rowTwo} /></ToolRow>
      </Toolbars>

      <PropertyBar>
        <Outlined as="div" $wide>
          <button aria-label="Page setup"><Glyph name="pageSet" /></button>
          <Chevron />
        </Outlined>
        <PropertyText><b>Name:</b> A2_2024_Diff(8)</PropertyText>
        <PropertyText><b>Pages:</b> 1</PropertyText>
        <Outlined aria-label="Insert page"><Glyph name="pageNew" /></Outlined>
      </PropertyBar>

      <Workspace>
        <Center>
          <Row>
            <Rail $side="left"><Tools items={leftRail} short /></Rail>
            <Pane>
              <TabBar>
                <Tab>A2_2024</Tab>
                <Tab $active>A2_2024_Diff(8)*<button aria-label="Close tab"><CloseX /></button></Tab>
                <Chevron label="Tabs" />
              </TabBar>
              <Sheet $edge={10} $bar={14}>
                <span />
                <Ruler origin={64} step={97.8} ticks={8} labels={['5', '5.5', '6', '6.5', '7', '7.5']} mark={580} />
                <Ruler vertical origin={19} step={97.8} ticks={8} labels={['12.5', '13', '13.5', '14', '14.5']} mark={165} />
                <Canvas><FloorPlan revised /></Canvas>
                <Scroll $thumb><Thumb /></Scroll>
              </Sheet>
            </Pane>
            <Splitter />
            <Pane>
              <TabBar>
                <Tab $active $dim>A2_2022<button aria-label="Close tab"><CloseX /></button></Tab>
                <Chevron label="Tabs" />
              </TabBar>
              <Sheet $edge={11} $bar={13}>
                <span />
                <Ruler origin={4} step={55.2} ticks={4} labels={['0', '4', '8', '12', '16', '20', '24', '28', '32', '36', '40']} />
                <Ruler vertical origin={44} step={55.2} ticks={4} labels={['0', '4', '8', '12', '16', '20', '24', '28', '32']} />
                <Canvas><FloorPlan /></Canvas>
                <Scroll>
                  <svg width="7" height="6"><path d="M3.500 0L7 6H0z" /></svg>
                  <svg width="7" height="6"><path d="M0 0h7L3.500 6z" /></svg>
                </Scroll>
              </Sheet>
            </Pane>
          </Row>
          <NavBar>
            <Tools items="list*" />
            <ViewTools>
              <Tools items="viewOne viewCols viewRows / fitPage fitWidth crosshair" />
            </ViewTools>
            <NavCenter>
              <Tools items="hand* arrow zoomPage first- prev-" />
              <PageInput aria-label="Page" defaultValue="1 of 1" />
              <Tools items="next- last- / viewPrev viewNext-" />
            </NavCenter>
            <NavEnd>
              <Tools items="contrast sun v lineWeight*" />
              <Measure $gap={10}>1/8" = 1'-0"</Measure>
              <Measure $gap={17}>42.00 x 30.00 in</Measure>
            </NavEnd>
          </NavBar>
        </Center>
        <Rail $side="right"><Tools items={rightRail} short /></Rail>
      </Workspace>

      <StatusBar>
        <span>Ready</span>
        <Group>
          <Tools items="grid gridSnap docSnap* markSnap reuse* sync* v" />
          <Measure $small $gap={18}>1/8" = 1'-0"</Measure>
          <Measure $small $gap={20}>42.00 x 30.00 in</Measure>
          <Measure $small $gap={38}>(6.47, 13.67)</Measure>
        </Group>
      </StatusBar>

      <TaskBar>
        <button aria-label="Start">
          <svg width="20" height="20" viewBox="0 0 20 20" fill="#4cc5f5" display="block">
            <path d="M0 0h9.500v9.500H0zM10.500 0H20v9.500h-9.500zM0 10.500h9.500V20H0zM10.500 10.500H20V20h-9.500z" />
          </svg>
        </button>
        <SearchBox>
          <svg width="13" height="13" viewBox="0 0 13 13" fill="none" stroke="#222" strokeWidth="1.500">
            <circle cx="5.500" cy="5.500" r="4.500" /><path d="M9 9l3.500 3.500" />
          </svg>
          <input type="search" placeholder="Search" aria-label="Search" />
        </SearchBox>
        <Apps>
          {apps.map(([name, art, state]) => (
            <AppButton key={name} aria-label={name} $state={state}>
              <svg width="20" height="20" viewBox="0 0 20 20" overflow="visible">{art}</svg>
            </AppButton>
          ))}
        </Apps>
        <Weather>
          <svg width="22" height="22" viewBox="0 0 22 22">
            <circle cx="9" cy="9" r="7.500" fill="#f5a93a" />
            <path d="M4 19.500a3.500 3.500 0 0 1 1-6.500 5 5 0 0 1 9-1 4 4 0 0 1 3 7.500z" fill="#dbe7f7" />
            <circle cx="15" cy="6" r="6" fill="#cc2c1d" />
            <text x="15" y="9" fontSize="9" textAnchor="middle" fill="#fff">3</text>
          </svg>
          <div>78°F<br /><span>Partly sunny</span></div>
        </Weather>
        <Tray>
          <svg width="15" height="10"><path d="M3.500 7l4-4 4 4" strokeWidth="1.500" /></svg>
          <svg width="15" height="16"><path d="M5 6V2h5v4M4 15V6h7v6M4 15h4M9 13l2 2 3-3" stroke="#e5cabf" /></svg>
          <svg width="15" height="16"><rect x="2.500" y="1" width="11" height="14" rx="5.500" fill="#1477d4" stroke="none" /><Bluetooth x="3" y="3" size={10} strokeWidth={2} /></svg>
          <svg width="16" height="16"><circle cx="8" cy="8" r="6.500" fill="#fff" stroke="none" /><rect x="4" y="4" width="8" height="8" rx="2" fill="#167f6b" stroke="none" /><text x="8" y="11" fontSize="8" fontWeight="700" textAnchor="middle" fill="#fff" stroke="none">e</text></svg>
          <svg width="16" height="16"><Mic size={16} strokeWidth={1.500} color="#e8a766" /></svg>
          <Tray $close>
            <svg width="16" height="16"><path d="M10 3H2v9h9V9M5 14.500h5M7 12v2M13 2v3M11.500 2h3v4h-3zM13 6v8" strokeWidth="1.300" /></svg>
            <svg width="10" height="14"><path d="M0 5h2l4-3v10L2 9H0zM7.500 5c1 1 1 3 0 4" /></svg>
            <svg width="14" height="12"><path d="M3 3h8v7H1V6M11 5h2v3h-2M1 0l2 3-2 2" strokeWidth="1.300" /><path d="M4 4h6v5H4z" fill="#fff" stroke="none" /></svg>
          </Tray>
        </Tray>
        <Clock>2:13:23 PM<br />2/26/2026</Clock>
      </TaskBar>
    </Page>
  </>
);

export default App;
